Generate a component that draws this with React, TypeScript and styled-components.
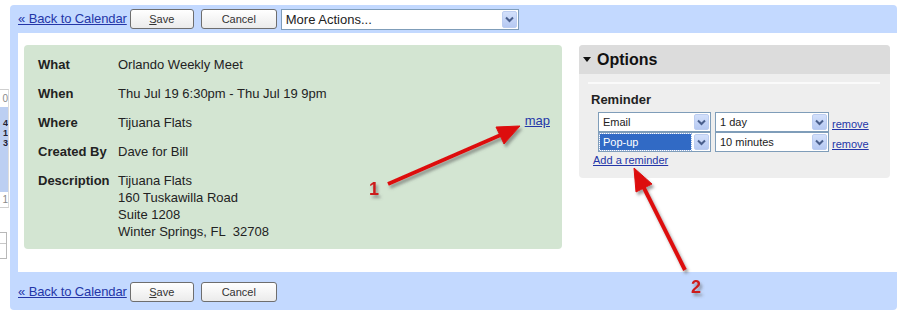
import styled, { createGlobalStyle } from "styled-components";

const GlobalStyle = createGlobalStyle`
  html, body { margin: 0; padding: 0; background: #fff; }
  body {
    font-family: "Liberation Sans", Arial, sans-serif;
    color: #222;
  }
`;

const LINK = "#2436a8";

const Styles = {
  Root: styled.div`
    position: relative;
    width: 902px;
    height: 324px;
    padding-top: 5px;
    box-sizing: border-box;
    display: flex;
    overflow: hidden;
  `,
  SideStub: styled.aside`
    width: 10px;
    flex-shrink: 0;
    display: flex;
    flex-direction: column;
    padding-top: 84px;
  `,
  MiniCal: styled.div`
    width: 8px;
    border-top: 1px solid #cfcfcf;
    border-bottom: 1px solid #cfcfcf;
    border-right: 1px solid #dcdcdc;
    font-size: 10px;
    text-align: right;
    overflow: hidden;
  `,
  GreyDay: styled.div<{ $h: number }>`
    height: ${(p) => p.$h}px;
    line-height: ${(p) => p.$h}px;
    color: #8a8a8a;
  `,
  WeekBlock: styled.div`
    height: 85px;
    background: #bccff2;
    padding-top: 11px;
    box-sizing: border-box;
    font-weight: bold;
    font-size: 9px;
    line-height: 10px;
    color: #223;
  `,
  InputStub: styled.div`
    margin-top: 24px;
    width: 7px;
    height: 27px;
    border: 1px solid #b8b8b8;
    border-left: none;
    box-sizing: border-box;
    & > div {
      height: 10px;
      border-bottom: 1px solid #c8c8c8;
    }
  `,
  Frame: styled.main`
    width: 887px;
    height: 305px;
    background: #c3d9ff;
    border-radius: 4px;
    display: flex;
    flex-direction: column;
  `,
  TopBar: styled.div`
    height: 28px;
    display: flex;
    align-items: center;
    padding-left: 8px;
  `,
  BottomBar: styled.div`
    flex: 1;
    display: flex;
    align-items: flex-start;
    padding: 10px 0 0 8px;
  `,
  BackLink: styled.a`
    font-size: 13px;
    letter-spacing: -0.1px;
    color: ${LINK};
    text-decoration: underline;
    line-height: 20px;
  `,
  Button: styled.button<{ $w: number; $ml: number }>`
    width: ${(p) => p.$w}px;
    height: 20px;
    margin-left: ${(p) => p.$ml}px;
    padding: 0;
    border: 1px solid #6e6e6e;
    border-radius: 3px;
    background: linear-gradient(#ffffff, #ebebeb);
    font-family: "Liberation Sans", Arial, sans-serif;
    font-size: 11px;
    color: #333;
    u { text-decoration: underline; }
  `,
  Select: styled.div<{ $w: number; $h: number; $fs: number; $ml?: number }>`
    width: ${(p) => p.$w}px;
    height: ${(p) => p.$h}px;
    margin-left: ${(p) => p.$ml ?? 0}px;
    box-sizing: border-box;
    border: 1px solid #7f9db9;
    background: #fff;
    display: flex;
    align-items: center;
    padding: 1px;
    font-size: ${(p) => p.$fs}px;
    color: #222;
  `,
  SelectValue: styled.span<{ $selected?: boolean }>`
    flex: 1;
    align-self: stretch;
    display: flex;
    align-items: center;
    margin-right: 3px;
    padding-left: 3px;
    background: ${(p) => (p.$selected ? "#316ac5" : "transparent")};
    color: ${(p) => (p.$selected ? "#fff" : "inherit")};
    outline: ${(p) => (p.$selected ? "1px dotted #9bb5e0" : "none")};
  `,
  ArrowBox: styled.span`
    width: 15px;
    align-self: stretch;
    box-sizing: border-box;
    border: 1px solid #bccdf0;
    border-radius: 2px;
    background: linear-gradient(#d3e0fb, #b6c9f2);
    display: flex;
    align-items: center;
    justify-content: center;
  `,
  Content: styled.section`
    margin-left: 8px;
    height: 239px;
    background: #fff;
    display: flex;
    align-items: flex-start;
    padding: 12px 0 0 6px;
    box-sizing: border-box;
  `,
  Details: styled.div`
    width: 538px;
    height: 204px;
    box-sizing: border-box;
    background: #d3e5d2;
    border-radius: 4px;
    padding: 5px 12px 0 14px;
    font-size: 13px;
  `,
  DetailRow: styled.div`
    display: flex;
    padding: 6px 0;
    line-height: 17px;
  `,
  Label: styled.div`
    width: 80px;
    flex-shrink: 0;
    font-weight: bold;
    color: #222;
  `,
  Value: styled.div`
    flex: 1;
    color: #222;
  `,
  MapLink: styled.a`
    color: ${LINK};
    text-decoration: underline;
    margin-top: -2px;
  `,
  Options: styled.div`
    margin-left: 17px;
    width: 311px;
    height: 133px;
    background: #eeeeee;
    border-radius: 4px;
    overflow: hidden;
  `,
  OptionsHeader: styled.div`
    height: 29px;
    background: #dcdcdc;
    display: flex;
    align-items: center;
    padding-left: 4px;
    font-size: 16px;
    font-weight: bold;
    color: #111;
    gap: 6px;
  `,
  Separator: styled.div`
    margin: 8px 10px 0 9px;
    height: 2px;
    background: #fafafa;
  `,
  OptionsBody: styled.div`
    padding: 7px 0 0 12px;
  `,
  SubHead: styled.div`
    font-size: 13px;
    font-weight: bold;
    line-height: 17px;
    color: #222;
  `,
  ReminderList: styled.div`
    margin: 4px 0 0 7px;
    display: flex;
    flex-direction: column;
  `,
  ReminderRow: styled.div`
    display: flex;
    align-items: center;
    font-size: 11px;
  `,
  SmallLink: styled.a<{ $ml: number }>`
    margin-left: ${(p) => p.$ml}px;
    margin-top: 3px;
    font-size: 11px;
    color: ${LINK};
    text-decoration: underline;
  `,
  AddLink: styled.a`
    display: block;
    margin: 2px 0 0 2px;
    font-size: 11px;
    color: ${LINK};
    text-decoration: underline;
  `,
  Overlay: styled.svg`
    position: absolute;
    left: 0;
    top: 0;
    pointer-events: none;
  `,
};

const Chevron = () => (
  <svg width="9" height="7" viewBox="0 0 9 7">
    <path d="M1 1.5 L4.5 5 L8 1.5" fill="none" stroke="#4a5f8c" strokeWidth="2" />
  </svg>
);

const DropDown = (props: {
  value: string;
  w: number;
  h?: number;
  fs?: number;
  ml?: number;
  selected?: boolean;
}) => (
  <Styles.Select $w={props.w} $h={props.h ?? 20} $fs={props.fs ?? 11} $ml={props.ml}>
    <Styles.SelectValue $selected={props.selected}>{props.value}</Styles.SelectValue>
    <Styles.ArrowBox>
      <Chevron />
    </Styles.ArrowBox>
  </Styles.Select>
);

const ActionBar = ({ bottom }: { bottom?: boolean }) => {
  const Bar = bottom ? Styles.BottomBar : Styles.TopBar;
  return (
    <Bar>
      <Styles.BackLink href="#">« Back to Calendar</Styles.BackLink>
      <Styles.Button $w={64} $ml={3}>
        <u>S</u>ave
      </Styles.Button>
      <Styles.Button $w={76} $ml={7}>
        Cancel
      </Styles.Button>
      {!bottom && <DropDown value="More Actions..." w={238} h={21} fs={13} ml={4} />}
    </Bar>
  );
};

const details = [
  { label: "What", lines: ["Orlando Weekly Meet"] },
  { label: "When", lines: ["Thu Jul 19 6:30pm - Thu Jul 19 9pm"] },
  { label: "Where", lines: ["Tijuana Flats"], map: true },
  { label: "Created By", lines: ["Dave for Bill"] },
  {
    label: "Description",
    lines: ["Tijuana Flats", "160 Tuskawilla Road", "Suite 1208", "Winter Springs, FL\u00a0\u00a032708"],
  },
];

const Annotations = () => (
  <Styles.Overlay width="902" height="324" viewBox="0 0 902 324">
    <defs>
      <filter id="shade" x="-20%" y="-20%" width="140%" height="140%">
        <feDropShadow dx="2" dy="3" stdDeviation="1.5" floodColor="#555" floodOpacity="0.55" />
      </filter>
    </defs>
    <g filter="url(#shade)" fill="#dd1010" stroke="#dd1010">
      <line x1="388" y1="184" x2="503" y2="134" strokeWidth="4" />
      <polygon points="520,126 496,127 504,144" strokeWidth="1" />
      <line x1="685" y1="270" x2="642" y2="184" strokeWidth="4" />
      <polygon points="634,168 652,184 636,192" strokeWidth="1" />
    </g>
    <g filter="url(#shade)" fill="#cc1a1a" fontFamily="Liberation Sans, Arial, sans-serif" fontWeight="bold" fontSize="18">
      <text x="369" y="195">1</text>
      <text x="691" y="293">2</text>
    </g>
  </Styles.Overlay>
);

export default function App() {
  return (
    <>
      <GlobalStyle />
      <Styles.Root>
        <Styles.SideStub>
          <Styles.MiniCal>
            <Styles.GreyDay $h={17}>0</Styles.GreyDay>
            <Styles.WeekBlock>
              4<br />1<br />3
            </Styles.WeekBlock>
            <Styles.GreyDay $h={15}>1</Styles.GreyDay>
          </Styles.MiniCal>
          <Styles.InputStub>
            <div />
          </Styles.InputStub>
        </Styles.SideStub>

        <Styles.Frame>
          <ActionBar />
          <Styles.Content>
            <Styles.Details>
              {details.map((d) => (
                <Styles.DetailRow key={d.label}>
                  <Styles.Label>{d.label}</Styles.Label>
                  <Styles.Value>
                    {d.lines.map((l) => (
                      <div key={l}>{l}</div>
                    ))}
                  </Styles.Value>
                  {d.map && <Styles.MapLink href="#">map</Styles.MapLink>}
                </Styles.DetailRow>
              ))}
            </Styles.Details>

            <Styles.Options>
              <Styles.OptionsHeader>
                <svg width="8" height="5" viewBox="0 0 8 5">
                  <path d="M0 0 H8 L4 5 Z" fill="#111" />
                </svg>
                Options
              </Styles.OptionsHeader>
              <Styles.Separator />
              <Styles.OptionsBody>
                <Styles.SubHead>Reminder</Styles.SubHead>
                <Styles.ReminderList>
                  <Styles.ReminderRow>
                    <DropDown value="Email" w={113} />
                    <DropDown value="1 day" w={114} ml={4} />
                    <Styles.SmallLink href="#" $ml={3}>remove</Styles.SmallLink>
                  </Styles.ReminderRow>
                  <Styles.ReminderRow>
                    <DropDown value="Pop-up" w={113} selected />
                    <DropDown value="10 minutes" w={114} ml={4} />
                    <Styles.SmallLink href="#" $ml={3}>remove</Styles.SmallLink>
                  </Styles.ReminderRow>
                </Styles.ReminderList>
                <Styles.AddLink href="#">Add a reminder</Styles.AddLink>
              </Styles.OptionsBody>
            </Styles.Options>
          </Styles.Content>
          <ActionBar bottom />
        </Styles.Frame>
        <Annotations />
      </Styles.Root>
    </>
  );
}
